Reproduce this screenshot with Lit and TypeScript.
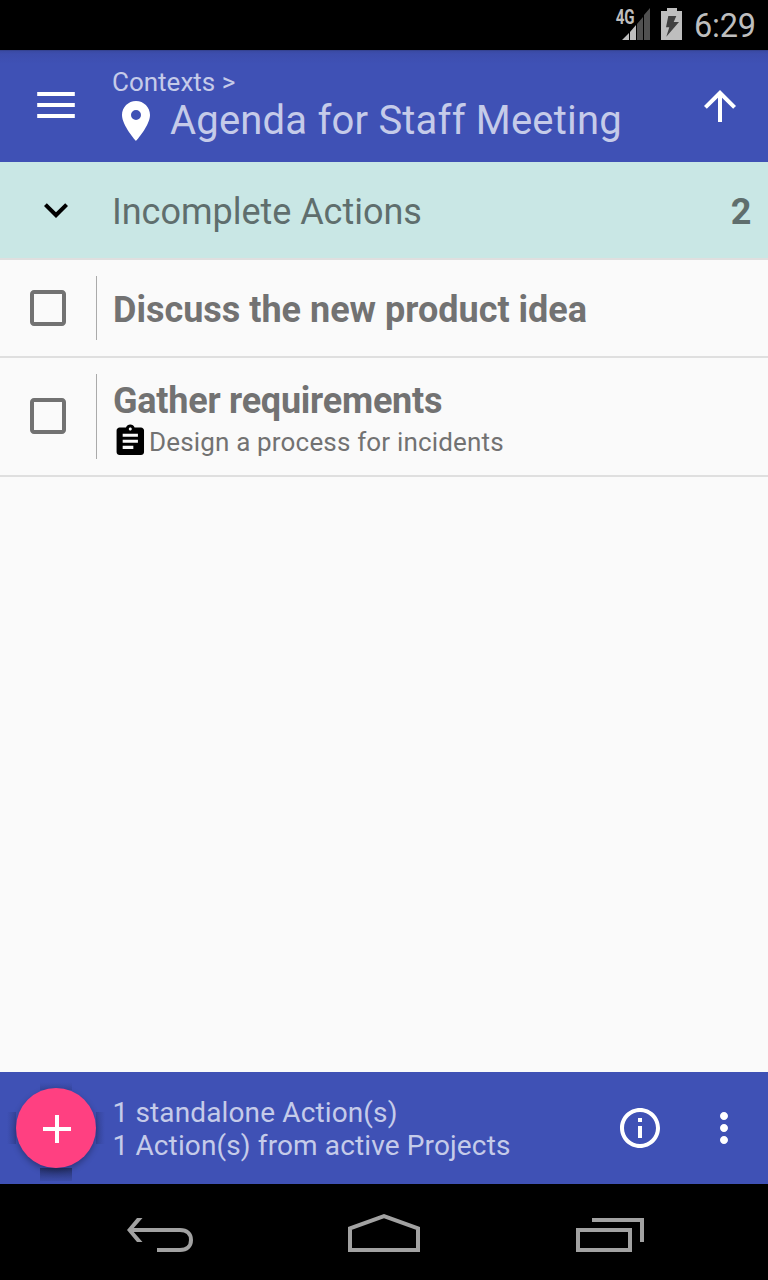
import { LitElement, html, svg, css, nothing } from "lit";
import { customElement, property } from "lit/decorators.js";

const material: Record<string, string> = {
  menu: "M2.6 5.5h18.8v2h-18.8zM2.6 11h18.8v2h-18.8zM2.6 16.5h18.8v2h-18.8z",
  place:
    "M12 2C8.13 2 5 5.13 5 9c0 5.25 7 13 7 13s7-7.75 7-13c0-3.87-3.13-7-7-7zm0 9.5a2.5 2.5 0 0 1 0-5 2.5 2.5 0 0 1 0 5z",
  up: "M4 12l1.41 1.41L11 7.83V20h2V7.83l5.58 5.59L20 12l-8-8-8 8z",
  expand: "M16.59 8.59L12 13.17 7.41 8.59 6 10l6 6 6-6z",
  blank:
    "M19 5v14H5V5h14m0-2H5c-1.1 0-2 .9-2 2v14c0 1.1.9 2 2 2h14c1.1 0 2-.9 2-2V5c0-1.1-.9-2-2-2z",
  assignment:
    "M19 3h-4.18C14.4 1.84 13.3 1 12 1c-1.3 0-2.4.84-2.82 2H5c-1.1 0-2 .9-2 2v14c0 1.1.9 2 2 2h14c1.1 0 2-.9 2-2V5c0-1.1-.9-2-2-2zm-7 0c.55 0 1 .45 1 1s-.45 1-1 1-1-.45-1-1 .45-1 1-1zm2 14H7v-2h7v2zm3-4H7v-2h10v2zm0-4H7V7h10v2z",
  add: "M19.5 13.5h-6v6h-2v-6h-6v-2h6v-6h2v6h6z",
  info: "M11 17h2v-6h-2v6zm1-15C6.48 2 2 6.48 2 12s4.48 10 10 10 10-4.48 10-10S17.52 2 12 2zm0 18c-4.41 0-8-3.59-8-8s3.59-8 8-8 8 3.59 8 8-3.59 8-8 8zM11 9h2V7h-2v2z",
  more: "M12 8c1.1 0 2-.9 2-2s-.9-2-2-2-2 .9-2 2 .9 2 2 2zm0 2c-1.1 0-2 .9-2 2s.9 2 2 2 2-.9 2-2-.9-2-2-2zm0 6c-1.1 0-2 .9-2 2s.9 2 2 2 2-.9 2-2-.9-2-2-2z",
};

const icon = (name: string) =>
  html`<svg class="icon ${name}" viewBox="0 0 24 24">${svg`<path d=${material[name]} />`}</svg>`;

@customElement("status-bar")
class StatusBar extends LitElement {
  static styles = css`
    :host {
      display: flex;
      justify-content: flex-end;
      height: 50px;
      background: #000;
      color: #bebebe;
    }
    svg { display: block; height: 50px; }
    .signal { width: 40px; margin-right: 6px; }
    .battery { width: 24px; margin-right: 10px; }
    .lit { fill: #bebebe; }
    .dim { fill: #505050; }
    .bolt { fill: #404040; }
    .net { font: bold 19.5px Roboto, sans-serif; fill: #bebebe; }
    .clock {
      font: 32.5px/50px Roboto, sans-serif;
      letter-spacing: -0.2px;
      width: 74px;
      padding-top: 1px;
      box-sizing: border-box;
      white-space: nowrap;
    }
  `;
  render() {
    return html`
      <svg class="signal" viewBox="614 0 40 50">
        <text class="net" x="615.7" y="24" textLength="19" lengthAdjust="spacingAndGlyphs">4G</text>
        <path class="lit" d="M622 40L629 33V40zM630 32L636 25V40H630z" />
        <path class="dim" d="M637 24L643 17V40H637zM644 15L650 8V40H644z" />
      </svg>
      <svg class="battery" viewBox="660 0 24 50">
        <path class="lit" d="M667 8h10v3h5v29h-21V11h6z" />
        <path class="bolt" d="M668.3 16H676.3L673.7 22H679L666.3 36.7L669.3 27.3H666z" />
      </svg>
      <span class="clock">6:29</span>
    `;
  }
}

@customElement("action-row")
class ActionRow extends LitElement {
  @property() name = "";
  @property() project = "";
  static styles = css`
    :host {
      display: flex;
      align-items: stretch;
      padding: 16px 0;
      border-bottom: 2px solid #dfdfdf;
      color: #727272;
      font-family: Roboto, sans-serif;
    }
    .check {
      width: 96px;
      display: flex;
      align-items: flex-start;
      justify-content: center;
      padding-top: 8px;
    }
    .check.tall { padding-top: 18px; }
    .icon { display: block; fill: currentColor; }
    .blank { width: 48px; height: 48px; }
    .body {
      flex: 1;
      min-height: 64px;
      border-left: 1px solid #aaa;
      padding-left: 16px;
      display: flex;
      flex-direction: column;
      justify-content: center;
    }
    .name {
      font-size: 36px;
      font-weight: 700;
      line-height: 42px;
      padding-top: 4px;
      white-space: nowrap;
    }
    .name.tight {
      padding-top: 6px;
      letter-spacing: -0.24px;
    }
    .project {
      display: flex;
      align-items: flex-start;
      height: 37px;
      font-size: 26px;
      line-height: 37px;
      letter-spacing: 0.17px;
      white-space: nowrap;
    }
    .project span { padding-top: 2px; }
    .assignment {
      width: 36.6px;
      height: 36.6px;
      fill: #000;
      margin: 0.8px 0.4px 0 -1px;
    }
  `;
  render() {
    const nested = this.project !== "";
    return html`
      <div class="check ${nested ? "tall" : ""}">${icon("blank")}</div>
      <div class="body">
        <div class="name ${nested ? "tight" : ""}">${this.name}</div>
        ${nested
          ? html`<div class="project">${icon("assignment")}<span>${this.project}</span></div>`
          : nothing}
      </div>
    `;
  }
}

@customElement("nav-bar")
class NavBar extends LitElement {
  static styles = css`
    :host {
      display: flex;
      justify-content: center;
      gap: 128px;
      height: 96px;
      background: #000;
    }
    svg {
      width: 98px;
      height: 96px;
      fill: none;
      stroke: #a2a2a2;
      stroke-width: 4;
    }
    .solid { fill: #a2a2a2; stroke: none; }
  `;
  render() {
    return html`
      <svg viewBox="109 1184 98 96">
        <path d="M130 1230H180C187 1230 191 1234 191 1240S187 1250 180 1250H157" />
        <path class="solid" d="M127 1230L137 1218H142.5L132 1230L142.5 1242H137z" />
      </svg>
      <svg viewBox="335 1184 98 96">
        <path d="M350 1228.4L384 1216.2L418 1228.4V1250H350z" />
      </svg>
      <svg viewBox="561 1184 98 96">
        <path d="M578 1230H630V1250H578zM592 1220H642V1242" />
      </svg>
    `;
  }
}

@customElement("app-root")
class AppRoot extends LitElement {
  static styles = css`
    :host {
      display: flex;
      flex-direction: column;
      width: 768px;
      height: 1280px;
      overflow: hidden;
      background: #fafafa;
      font-family: Roboto, sans-serif;
    }
    .icon { display: block; width: 48px; height: 48px; flex: none; fill: #fff; }
    .icon.expand { fill: #000; }
    .bar {
      display: flex;
      height: 112px;
      box-sizing: border-box;
      background: #3f51b5;
      color: #c5cbe9;
      white-space: nowrap;
    }
    .top {
      background: linear-gradient(#303c83 0, #3a4aa3 1px, #3d4eae 4px, #3f51b5 14px);
    }
    .lead { width: 112px; display: flex; align-items: center; justify-content: center; }
    .top .lead { height: 110px; }
    .titles { flex: 1; padding-top: 16px; }
    .crumb { font-size: 26px; line-height: 32px; height: 32px; }
    .title {
      display: flex;
      font-size: 40px;
      line-height: 46px;
      height: 46px;
      letter-spacing: 0.19px;
    }
    .title .place { margin-top: -1px; margin-right: 10px; }
    .top .up { margin: 32px 24px 0 0; }
    .section {
      display: flex;
      align-items: center;
      height: 96px;
      background: #c9e7e5;
      border-bottom: 2px solid #dfdfdf;
      color: #5f6e6d;
      font-size: 36px;
    }
    .label { flex: 1; padding-top: 3px; letter-spacing: -0.03px; }
    .count { font-weight: 700; padding: 3px 16.5px 0 0; }
    .list { flex: 1; }
    .bottom { align-items: center; }
    .fab {
      width: 80px;
      height: 80px;
      border-radius: 50%;
      background: #ff4081;
      box-shadow: 0 3px 6px rgba(0, 0, 0, 0.3);
      display: flex;
      align-items: center;
      justify-content: center;
    }
    .shade {
      height: 112px;
      width: 112px;
      display: grid;
      place-items: center;
      background:
        linear-gradient(#3f51b5, #37479f) 40px 10px / 32px 8px no-repeat,
        linear-gradient(#27336f, #3b4ca9) 40px 96px / 32px 13px no-repeat,
        linear-gradient(to right, #3f51b5, #35449a) 7px 40px / 9px 32px no-repeat,
        linear-gradient(to left, #3f51b5, #35449a) 96px 40px / 9px 32px no-repeat;
    }
    .summary {
      flex: 1;
      font-size: 28px;
      line-height: 33px;
      letter-spacing: 0.13px;
      padding: 1px 0 0 0.5px;
    }
    .bottom .info { margin-right: 36px; }
    .bottom .more { margin-right: 20px; }
  `;
  render() {
    return html`
      <status-bar></status-bar>
      <header class="bar top">
        <div class="lead">${icon("menu")}</div>
        <div class="titles">
          <div class="crumb">Contexts &gt;</div>
          <div class="title">${icon("place")}<span>Agenda for Staff Meeting</span></div>
        </div>
        ${icon("up")}
      </header>
      <div class="section">
        <div class="lead">${icon("expand")}</div>
        <div class="label">Incomplete Actions</div>
        <div class="count">2</div>
      </div>
      <main class="list">
        <action-row name="Discuss the new product idea"></action-row>
        <action-row name="Gather requirements" project="Design a process for incidents"></action-row>
      </main>
      <footer class="bar bottom">
        <div class="shade"><div class="fab">${icon("add")}</div></div>
        <div class="summary">
          <div>1 standalone Action(s)</div>
          <div>1 Action(s) from active Projects</div>
        </div>
        ${icon("info")} ${icon("more")}
      </footer>
      <nav-bar></nav-bar>
    `;
  }
}
